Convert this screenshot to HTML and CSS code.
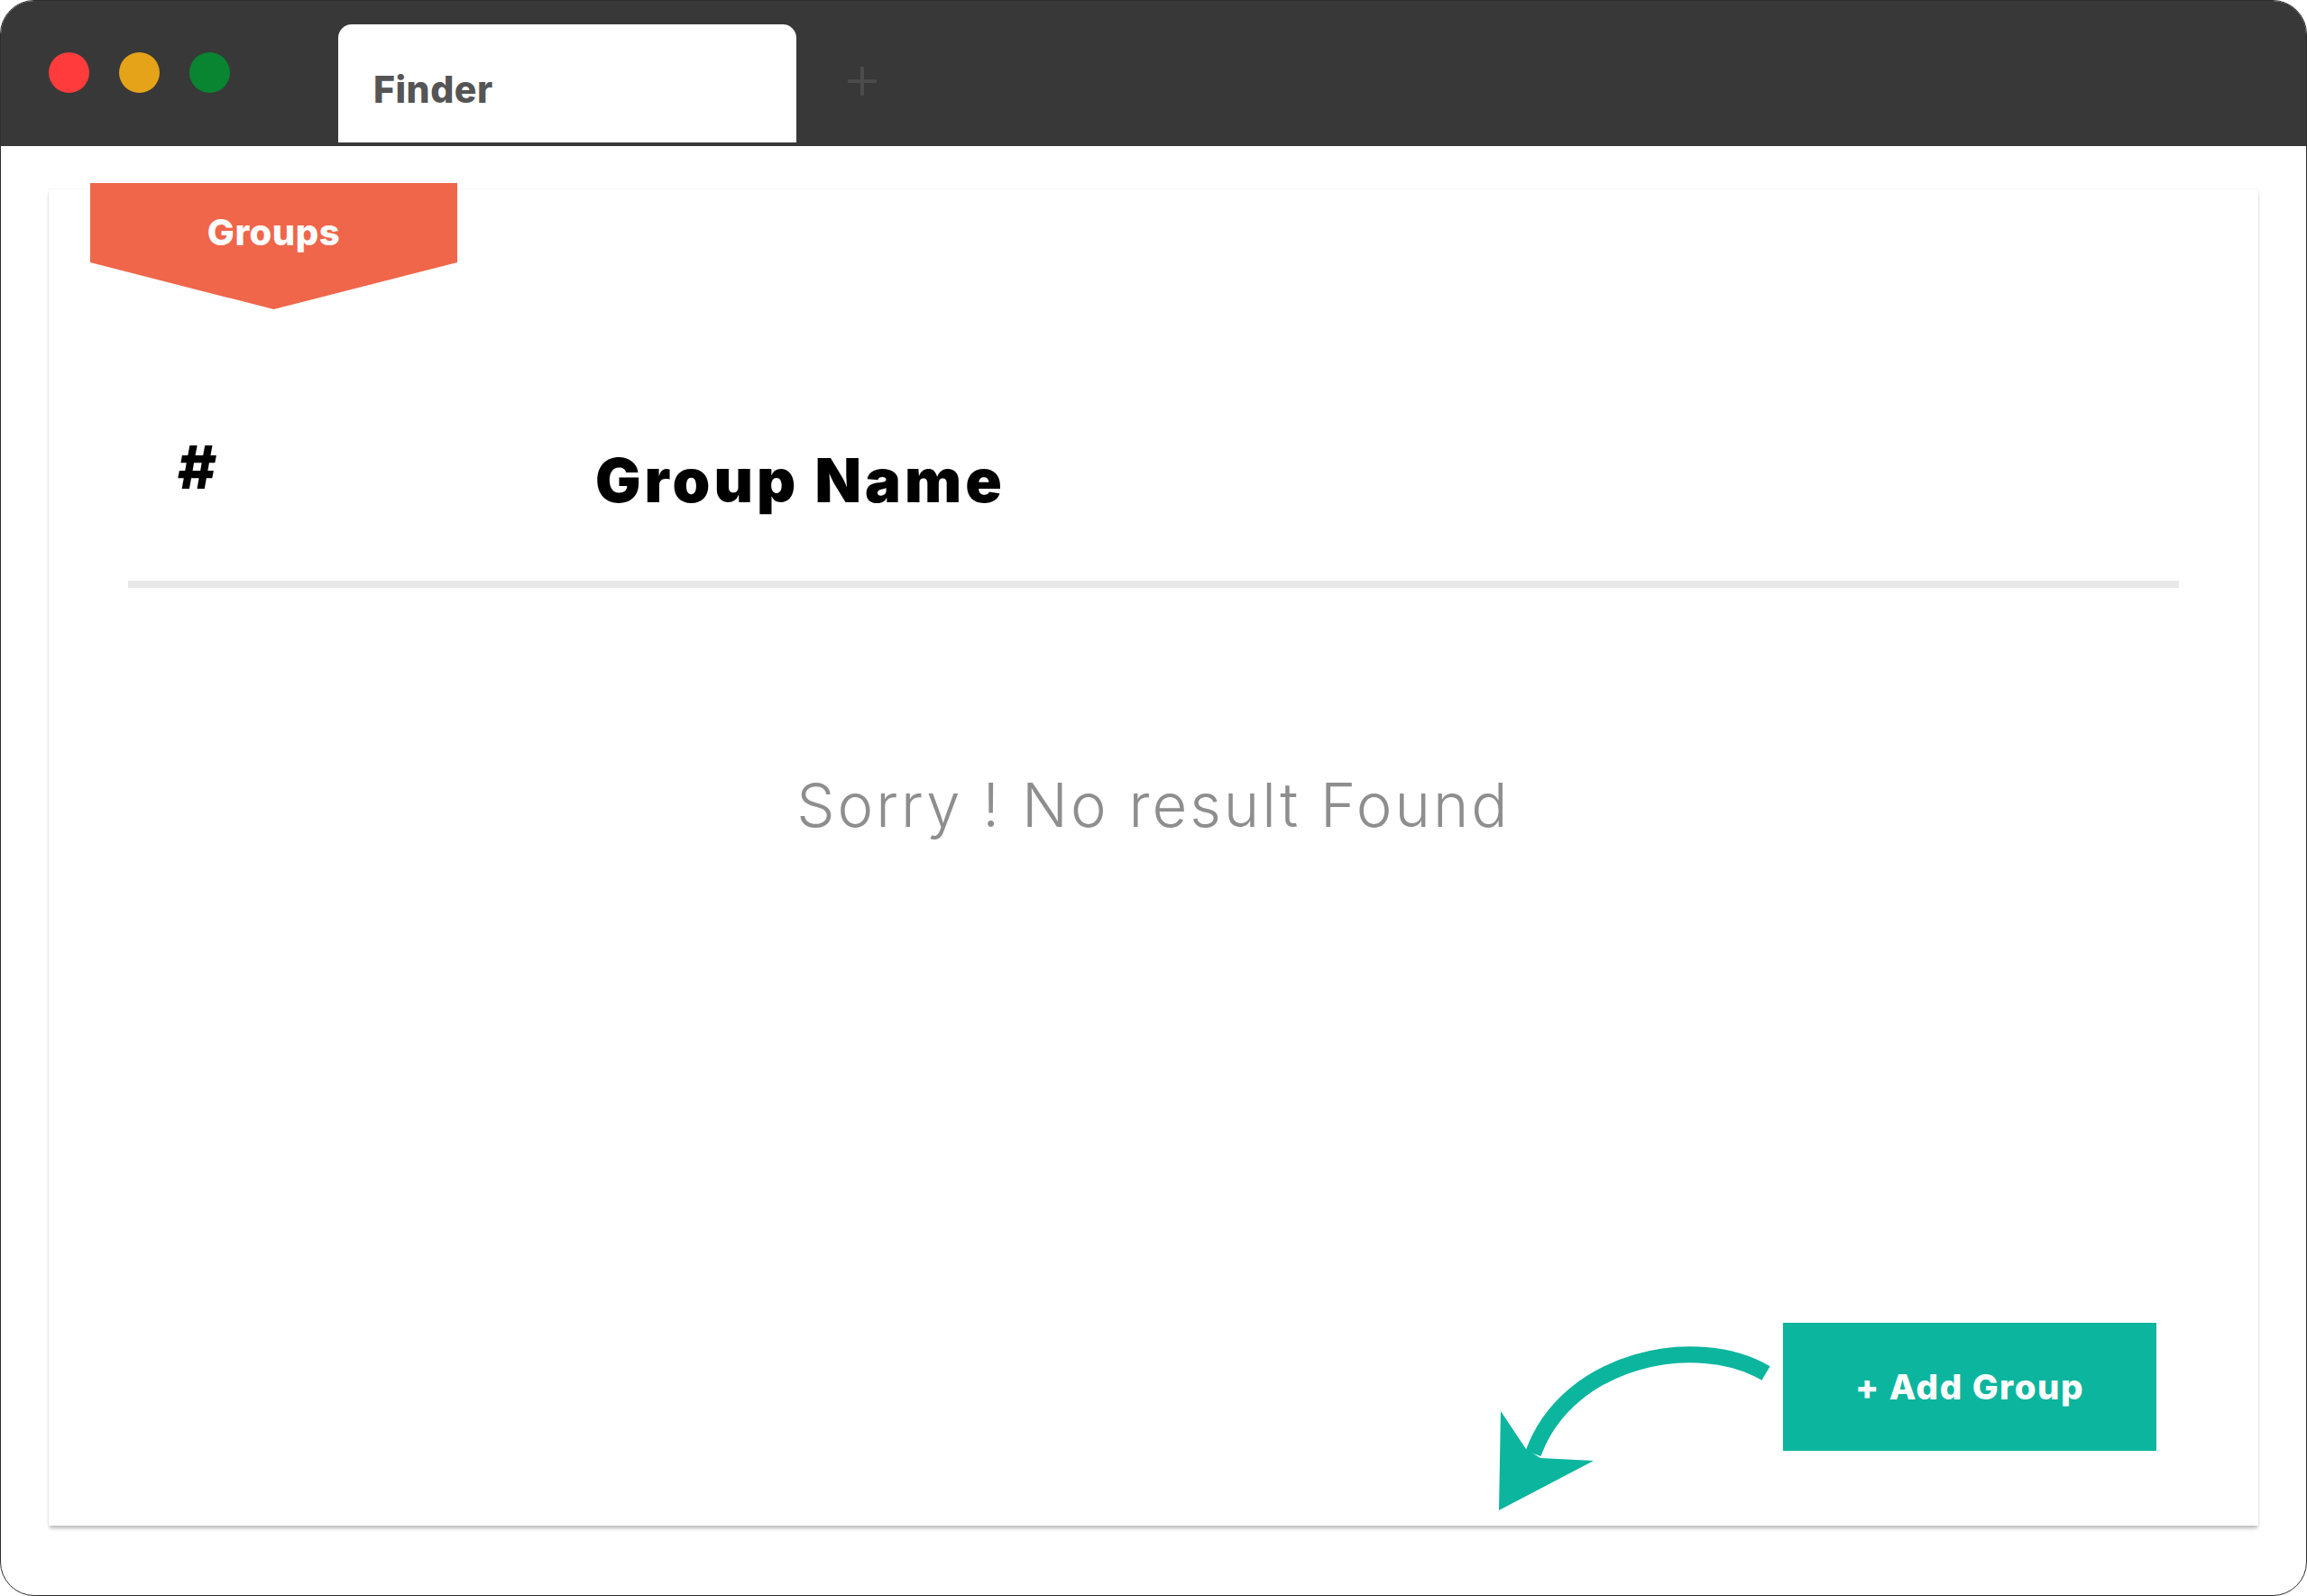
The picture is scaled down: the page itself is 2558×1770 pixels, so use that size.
FILE: index.html
```html
<!DOCTYPE html>
<html lang="en">
<head>
<meta charset="utf-8">
<title>Finder - Groups</title>
<link rel="stylesheet" href="styles.css">
</head>
<body>
<div class="window">
  <div class="titlebar">
    <div class="lights">
      <span class="light red"></span>
      <span class="light yellow"></span>
      <span class="light green"></span>
    </div>
    <div class="tab">Finder</div>
    <div class="newtab"></div>
  </div>
  <div class="content">
    <div class="card">
      <div class="banner"><span>Groups</span></div>
      <div class="table">
        <div class="thead">
          <div class="th num">#</div>
          <div class="th name">Group Name</div>
        </div>
        <div class="empty">Sorry ! No result Found</div>
      </div>
      <div class="actions">
        <svg class="arrow" viewBox="1655 1488 315 192" width="315" height="192" xmlns="http://www.w3.org/2000/svg">
          <path d="M1958,1523 C1882,1478 1738,1506 1700,1612" fill="none" stroke="#0cb59e" stroke-width="18"/>
          <polygon points="1664,1565 1692,1607 1708,1617 1767,1620 1662,1675" fill="#0cb59e"/>
        </svg>
        <button class="add">+ Add Group</button>
      </div>
    </div>
  </div>
</div>
</body>
</html>
```

FILE: styles.css
```css
* { box-sizing: border-box; }
html, body { margin: 0; padding: 0; background: #ffffff; }
body { width: 2558px; height: 1770px; overflow: hidden; font-family: "Inter", "Liberation Sans", sans-serif; }

.window {
  width: 2558px;
  height: 1770px;
  border: 1px solid #2e2e2e;
  border-radius: 38px;
  overflow: hidden;
  background: #ffffff;
  display: flex;
  flex-direction: column;
}

.titlebar {
  height: 161px;
  flex: 0 0 161px;
  background: #383838;
  display: flex;
  align-items: flex-start;
}
.lights { display: flex; gap: 33px; margin-left: 53px; margin-top: 57px; }
.light { width: 45px; height: 45px; border-radius: 50%; display: block; }
.red { background: #ff3b3b; }
.yellow { background: #e5a31a; }
.green { background: #098431; }

.tab {
  margin-left: 120px;
  margin-top: 26px;
  width: 508px;
  height: 131px;
  background: #ffffff;
  border-radius: 15px 15px 0 0;
  color: #555555;
  font-weight: 800;
  font-size: 41px;
  line-height: 1;
  padding-left: 39px;
  padding-top: 52px;
  letter-spacing: 0.5px;
}
.newtab {
  margin-left: 57px;
  margin-top: 73px;
  width: 32px;
  height: 32px;
  background:
    linear-gradient(#4b4b4b, #4b4b4b) center / 4px 32px no-repeat,
    linear-gradient(#4b4b4b, #4b4b4b) center / 32px 4px no-repeat;
}

.content { flex: 1; padding: 48px 53px 0 53px; }

.card {
  height: 1482px;
  background: #ffffff;
  box-shadow: 0 4px 4px -1px rgba(0,0,0,0.26), 0 0 2px rgba(0,0,0,0.10);
  display: flex;
  flex-direction: column;
}

.banner {
  margin-left: 46px;
  margin-top: -7px;
  width: 407px;
  height: 140px;
  background: #f0664a;
  clip-path: polygon(0 0, 100% 0, 100% 62.9%, 50% 100%, 0 62.9%);
  color: #ffffff;
  font-weight: 800;
  font-size: 40px;
  line-height: 1;
  text-align: center;
  padding-top: 35px;
  letter-spacing: 0.5px;
}

.table { margin: 0 88px; }
.thead {
  display: flex;
  align-items: flex-start;
  padding-top: 156px;
  padding-bottom: 78px;
  border-bottom: 8px solid #e8e8e8;
}
.th { color: #000000; line-height: 1; }
.num {
  width: 518px;
  padding-left: 54px;
  font-size: 66px;
  font-weight: 800;
  font-style: italic;
  margin-top: -14px;
}
.name {
  font-size: 67px;
  font-weight: 900;
  letter-spacing: 4px;
}

.empty {
  margin-top: 207px;
  text-align: center;
  color: #8e8e8e;
  font-size: 67px;
  font-weight: 300;
  line-height: 1;
  letter-spacing: 3px;
}

.actions {
  margin-top: auto;
  display: flex;
  justify-content: flex-end;
  align-items: flex-start;
  padding-right: 113px;
  padding-bottom: 83px;
}
.arrow {
  display: block;
  margin-top: 21px;
  margin-right: 7px;
  margin-bottom: -71px;
}
.add {
  width: 414px;
  height: 142px;
  border: none;
  border-radius: 0;
  background: #0cb59e;
  color: #ffffff;
  font-family: "Inter", "Liberation Sans", sans-serif;
  font-weight: 800;
  font-size: 38.5px;
  line-height: 1;
  padding: 0;
  letter-spacing: 1.5px;
}
```
